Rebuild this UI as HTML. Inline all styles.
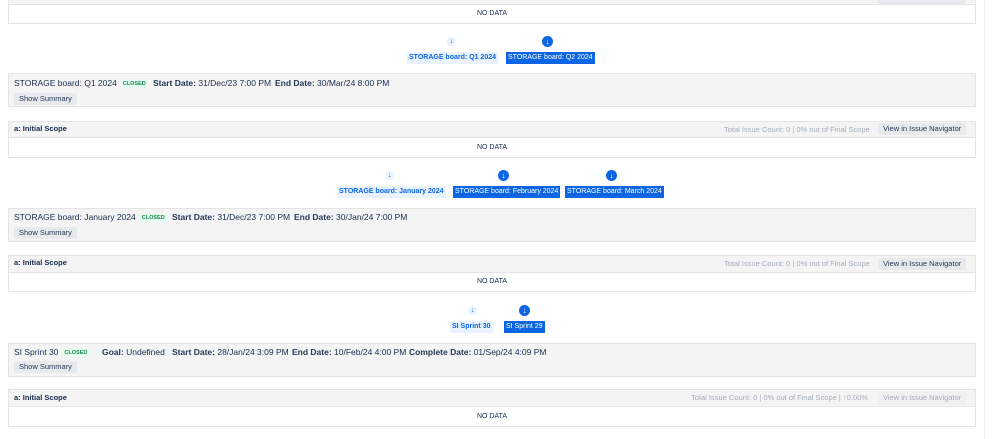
<!DOCTYPE html>
<html><head><meta charset="utf-8"><style>
body{margin:0;width:998px;height:439px;overflow:hidden;background:#fff;font-family:"Liberation Sans",sans-serif;color:#172b4d;position:relative}
.a{position:absolute}
.hdr{position:absolute;left:8px;width:968px;background:#f4f4f4;border:1px solid #e4e4e4;box-sizing:border-box}
.row{position:absolute;left:8px;width:968px;background:#fff;border:1px solid #e4e4e4;border-top:none;box-sizing:border-box;font-size:7px;text-align:center;color:#172b4d}
.sp{position:absolute;left:8px;width:968px;height:34px;background:#f4f4f4;border:1px solid #e4e4e4;box-sizing:border-box}
.t{position:absolute;font-size:8.5px;white-space:nowrap;color:#172b4d}
.btn{position:absolute;font-size:7.5px;background:#e8e9ec;color:#253858;padding:0 5px;height:12px;line-height:12px;border-radius:2px;white-space:nowrap}
.closed{font-size:5.5px;font-weight:bold;color:#1e8a53;background:#e3fcef;padding:1px 2px;margin-left:4px;vertical-align:1px}
.b{font-weight:bold;color:#253858}
.lab{position:absolute;font-size:7px;font-weight:bold;height:12px;line-height:12px;padding:0 2px;white-space:nowrap}
.l1{background:#e9f2ff;color:#0c66e4}
.l2{background:#0c66e4;color:#fff;font-weight:normal}
.ic{position:absolute;border-radius:50%;color:#fff;text-align:center;font-weight:bold}
.ics{width:9px;height:9px;background:#e9f2ff;color:#0c66e4;font-size:7px;line-height:9px}
.icb{width:11px;height:11px;background:#0c66e4;font-size:8px;line-height:11px}
.hl{font-size:7.5px;font-weight:bold}
.gr{position:absolute;font-size:7.5px;color:#a5adba;white-space:nowrap}
</style></head><body>
<div class="a" style="left:984px;top:0;width:1px;height:439px;background:#f0f0f0"></div>

<div class="hdr" style="top:0;height:5px;border-top:none"></div>
<div class="btn" style="left:878px;top:-8px;width:77px"></div>
<div class="row" style="top:5px;height:19px;line-height:18px">NO DATA</div>

<div class="ic ics" style="left:447px;top:37px">↓</div>
<div class="ic icb" style="left:542px;top:36px">↓</div>
<div class="lab l1" style="left:407px;top:52px">STORAGE board: Q1 2024</div>
<div class="lab l2" style="left:506px;top:52px">STORAGE board: Q2 2024</div>

<div class="sp" style="top:73px"></div>
<div class="t" style="left:14px;top:78px">STORAGE board: Q1 2024<span class="closed">CLOSED</span></div>
<div class="t" style="left:153px;top:78px"><span class="b">Start Date:</span> 31/Dec/23 7:00 PM</div>
<div class="t" style="left:275px;top:78px"><span class="b">End Date:</span> 30/Mar/24 8:00 PM</div>
<div class="btn" style="left:14px;top:93px">Show Summary</div>

<div class="hdr" style="top:121px;height:17px"></div>
<div class="t hl" style="left:14px;top:124px">a: Initial Scope</div>
<div class="gr" style="left:724px;top:125px">Total Issue Count: 0 | 0% out of Final Scope</div>
<div class="btn" style="left:878px;top:123px">View in Issue Navigator</div>
<div class="row" style="top:138px;height:20px;line-height:19px">NO DATA</div>

<div class="ic ics" style="left:385px;top:171px">↓</div>
<div class="ic icb" style="left:498px;top:170px">↓</div>
<div class="ic icb" style="left:606px;top:170px">↓</div>
<div class="lab l1" style="left:337px;top:186px">STORAGE board: January 2024</div>
<div class="lab l2" style="left:453px;top:186px">STORAGE board: February 2024</div>
<div class="lab l2" style="left:565px;top:186px">STORAGE board: March 2024</div>

<div class="sp" style="top:208px"></div>
<div class="t" style="left:14px;top:212px">STORAGE board: January 2024<span class="closed">CLOSED</span></div>
<div class="t" style="left:172px;top:212px"><span class="b">Start Date:</span> 31/Dec/23 7:00 PM</div>
<div class="t" style="left:294px;top:212px"><span class="b">End Date:</span> 30/Jan/24 7:00 PM</div>
<div class="btn" style="left:14px;top:227px">Show Summary</div>

<div class="hdr" style="top:255px;height:18px"></div>
<div class="t hl" style="left:14px;top:258px">a: Initial Scope</div>
<div class="gr" style="left:724px;top:259px">Total Issue Count: 0 | 0% out of Final Scope</div>
<div class="btn" style="left:878px;top:258px">View in Issue Navigator</div>
<div class="row" style="top:273px;height:19px;line-height:18px">NO DATA</div>

<div class="ic ics" style="left:468px;top:306px">↓</div>
<div class="ic icb" style="left:519px;top:305px">↓</div>
<div class="lab l1" style="left:450px;top:321px">SI Sprint 30</div>
<div class="lab l2" style="left:504px;top:321px">SI Sprint 29</div>

<div class="sp" style="top:343px"></div>
<div class="t" style="left:14px;top:347px">SI Sprint 30<span class="closed">CLOSED</span></div>
<div class="t" style="left:102px;top:347px"><span class="b">Goal:</span> Undefined</div>
<div class="t" style="left:172px;top:347px"><span class="b">Start Date:</span> 28/Jan/24 3:09 PM</div>
<div class="t" style="left:292px;top:347px"><span class="b">End Date:</span> 10/Feb/24 4:00 PM</div>
<div class="t" style="left:409px;top:347px"><span class="b">Complete Date:</span> 01/Sep/24 4:09 PM</div>
<div class="btn" style="left:14px;top:361px">Show Summary</div>

<div class="hdr" style="top:389px;height:18px"></div>
<div class="t hl" style="left:14px;top:393px">a: Initial Scope</div>
<div class="gr" style="left:691px;top:393px">Total Issue Count: 0 | 0% out of Final Scope | ↑0.00%</div>
<div class="btn" style="left:878px;top:392px;color:#a5adba;background:#eef0f2">View in Issue Navigator</div>
<div class="row" style="top:407px;height:20px;line-height:19px">NO DATA</div>
</body></html>
